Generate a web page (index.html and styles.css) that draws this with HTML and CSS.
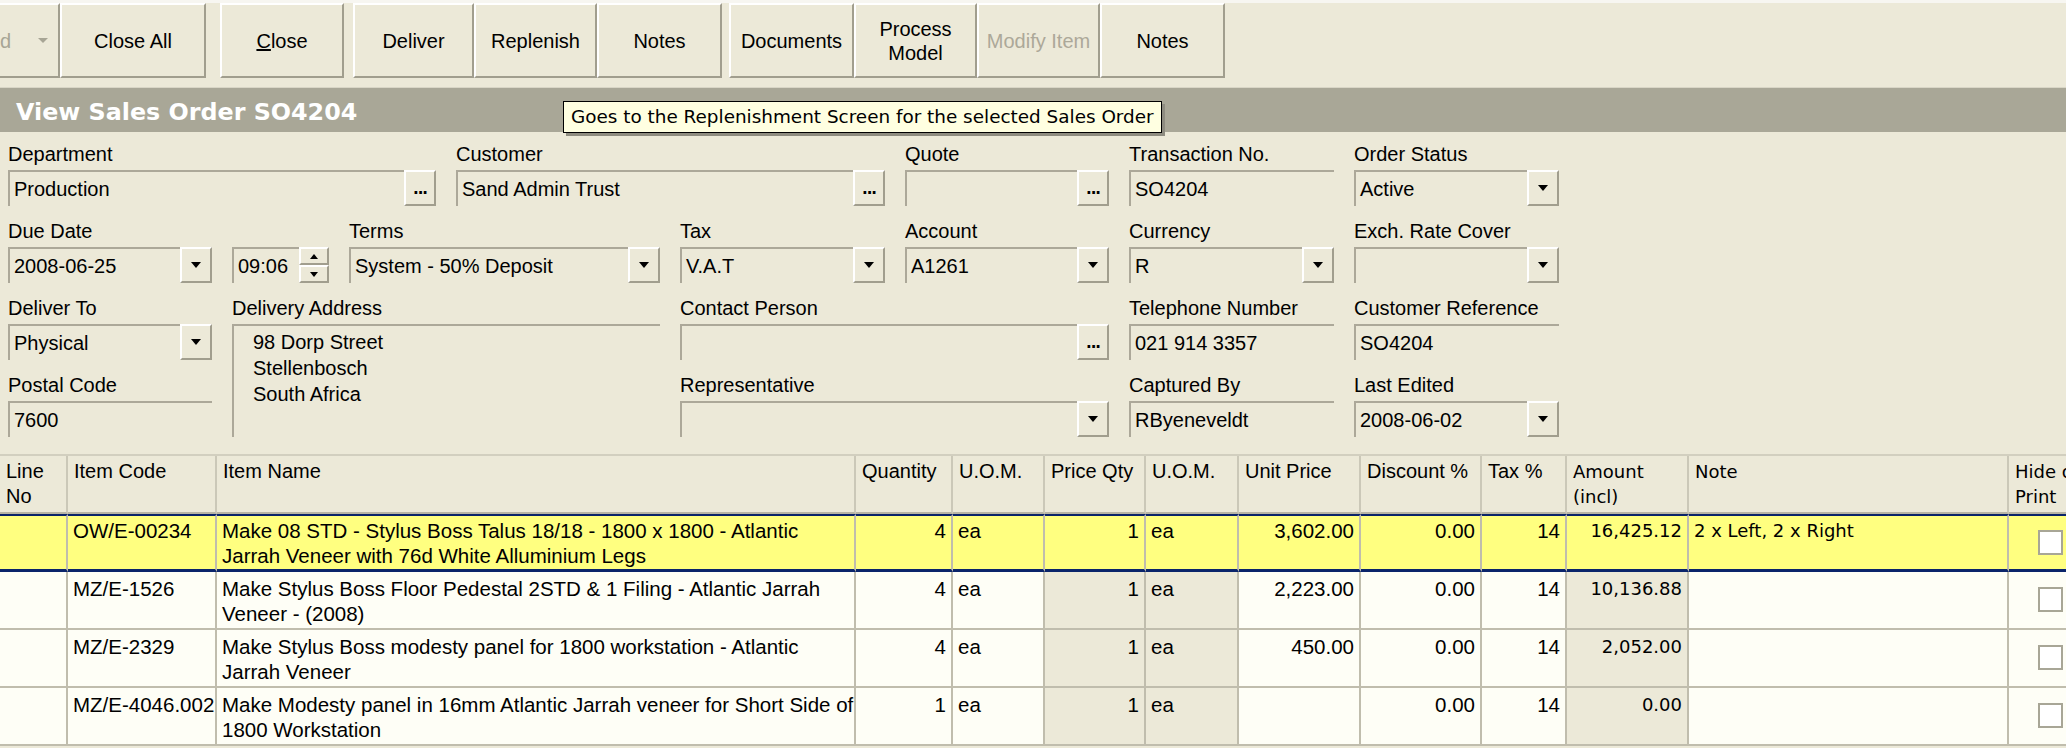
FILE: index.html
```html
<!DOCTYPE html>
<html>
<head>
<meta charset="utf-8">
<link rel="stylesheet" href="styles.css">
</head>
<body>
<div class="app">
  <div class="toolbar">
    <div class="tb-group">
      <div class="tbtn first"><span class="dis">d</span><span class="split-arrow"></span></div>
      <div class="tbtn w146">Close All</div>
    </div>
    <div class="tb-group g2">
      <div class="tbtn w124"><u>C</u>lose</div>
    </div>
    <div class="tb-group g3">
      <div class="tbtn w121">Deliver</div>
      <div class="tbtn w123">Replenish</div>
      <div class="tbtn w125">Notes</div>
    </div>
    <div class="tb-group g4">
      <div class="tbtn w125">Documents</div>
      <div class="tbtn w123">Process<br>Model</div>
      <div class="tbtn w123 disabled">Modify Item</div>
      <div class="tbtn w125">Notes</div>
    </div>
  </div>

  <div class="titlebar">
    <span class="title">View Sales Order SO4204</span>
    <div class="tooltip">Goes to the Replenishment Screen for the selected Sales Order</div>
  </div>

  <div class="form">
    <!-- row 1 -->
    <div class="field c1-3"><div class="lbl">Department</div><div class="box"><span class="val">Production</span><span class="btn3d dots">...</span></div></div>
    <div class="field c4-5"><div class="lbl">Customer</div><div class="box"><span class="val">Sand Admin Trust</span><span class="btn3d dots">...</span></div></div>
    <div class="field c6"><div class="lbl">Quote</div><div class="box"><span class="val"></span><span class="btn3d dots">...</span></div></div>
    <div class="field c7"><div class="lbl">Transaction No.</div><div class="box"><span class="val">SO4204</span></div></div>
    <div class="field c8"><div class="lbl">Order Status</div><div class="box"><span class="val">Active</span><span class="btn3d dd"></span></div></div>

    <!-- row 2 -->
    <div class="field c1"><div class="lbl">Due Date</div><div class="box"><span class="val">2008-06-25</span><span class="btn3d dd"></span></div></div>
    <div class="field c2"><div class="lbl">&nbsp;</div><div class="box"><span class="val">09:06</span><span class="spin"><span class="spin-up"></span><span class="spin-down"></span></span></div></div>
    <div class="field c3-4"><div class="lbl">Terms</div><div class="box"><span class="val">System - 50% Deposit</span><span class="btn3d dd"></span></div></div>
    <div class="field c5"><div class="lbl">Tax</div><div class="box"><span class="val">V.A.T</span><span class="btn3d dd"></span></div></div>
    <div class="field c6"><div class="lbl">Account</div><div class="box"><span class="val">A1261</span><span class="btn3d dd"></span></div></div>
    <div class="field c7"><div class="lbl">Currency</div><div class="box"><span class="val">R</span><span class="btn3d dd"></span></div></div>
    <div class="field c8"><div class="lbl">Exch. Rate Cover</div><div class="box"><span class="val"></span><span class="btn3d dd"></span></div></div>

    <!-- rows 3-4 -->
    <div class="field c1 r3"><div class="lbl">Deliver To</div><div class="box"><span class="val">Physical</span><span class="btn3d dd"></span></div></div>
    <div class="field c2-4 r3-4"><div class="lbl">Delivery Address</div><div class="box memo"><div class="memo-text">98 Dorp Street<br>Stellenbosch<br>South Africa</div></div></div>
    <div class="field c5-6 r3"><div class="lbl">Contact Person</div><div class="box"><span class="val"></span><span class="btn3d dots">...</span></div></div>
    <div class="field c7 r3"><div class="lbl">Telephone Number</div><div class="box"><span class="val">021 914 3357</span></div></div>
    <div class="field c8 r3"><div class="lbl">Customer Reference</div><div class="box"><span class="val">SO4204</span></div></div>

    <div class="field c1 r4"><div class="lbl">Postal Code</div><div class="box"><span class="val">7600</span></div></div>
    <div class="field c5-6 r4"><div class="lbl">Representative</div><div class="box"><span class="val"></span><span class="btn3d dd"></span></div></div>
    <div class="field c7 r4"><div class="lbl">Captured By</div><div class="box"><span class="val">RByeneveldt</span></div></div>
    <div class="field c8 r4"><div class="lbl">Last Edited</div><div class="box"><span class="val">2008-06-02</span><span class="btn3d dd"></span></div></div>
  </div>

  <div class="gridwrap">
    <table class="grid">
      <colgroup>
        <col class="w-line"><col class="w-code"><col class="w-name"><col class="w-qty"><col class="w-uom"><col class="w-pqty"><col class="w-uom2"><col class="w-price"><col class="w-disc"><col class="w-tax"><col class="w-amt"><col class="w-note"><col class="w-hide">
      </colgroup>
      <thead>
        <tr>
          <th>Line<br>No</th><th>Item Code</th><th>Item Name</th><th>Quantity</th><th>U.O.M.</th><th>Price Qty</th><th>U.O.M.</th><th>Unit Price</th><th>Discount %</th><th>Tax %</th><th class="tah">Amount<br>(incl)</th><th class="tah">Note</th><th class="tah">Hide on<br>Print</th>
        </tr>
      </thead>
      <tbody>
        <tr class="sel">
          <td></td><td>OW/E-00234</td><td>Make 08 STD - Stylus Boss Talus 18/18 - 1800 x 1800 - Atlantic<br>Jarrah Veneer with 76d White Alluminium Legs</td><td class="num">4</td><td>ea</td><td class="num sh">1</td><td class="sh">ea</td><td class="num">3,602.00</td><td class="num">0.00</td><td class="num">14</td><td class="num tah sh">16,425.12</td><td class="tah">2 x Left, 2 x Right</td><td class="cbcell"><span class="cb"></span></td>
        </tr>
        <tr>
          <td></td><td>MZ/E-1526</td><td>Make Stylus Boss Floor Pedestal 2STD &amp; 1 Filing - Atlantic Jarrah<br>Veneer - (2008)</td><td class="num">4</td><td>ea</td><td class="num sh">1</td><td class="sh">ea</td><td class="num">2,223.00</td><td class="num">0.00</td><td class="num">14</td><td class="num tah sh">10,136.88</td><td class="tah"></td><td class="cbcell"><span class="cb"></span></td>
        </tr>
        <tr>
          <td></td><td>MZ/E-2329</td><td>Make Stylus Boss modesty panel for 1800 workstation - Atlantic<br>Jarrah Veneer</td><td class="num">4</td><td>ea</td><td class="num sh">1</td><td class="sh">ea</td><td class="num">450.00</td><td class="num">0.00</td><td class="num">14</td><td class="num tah sh">2,052.00</td><td class="tah"></td><td class="cbcell"><span class="cb"></span></td>
        </tr>
        <tr>
          <td></td><td>MZ/E-4046.002</td><td>Make Modesty panel in 16mm Atlantic Jarrah veneer for Short Side of<br>1800 Workstation</td><td class="num">1</td><td>ea</td><td class="num sh">1</td><td class="sh">ea</td><td class="num"></td><td class="num">0.00</td><td class="num">14</td><td class="num tah sh">0.00</td><td class="tah"></td><td class="cbcell"><span class="cb"></span></td>
        </tr>
      </tbody>
    </table>
  </div>
</div>
</body>
</html>
```

FILE: styles.css
```css
html, body {
  margin: 0;
  padding: 0;
  background: #ECE9D8;
}
body {
  width: 2066px;
  height: 748px;
  overflow: hidden;
  font-family: "Liberation Sans", Arial, sans-serif;
  font-size: 20px;
  color: #000;
}
.app {
  width: 2066px;
  height: 748px;
  overflow: hidden;
  position: relative;
}

/* ---------- toolbar ---------- */
.toolbar {
  height: 84px;
  border-top: 3px solid #F7F6F1;
  border-bottom: 1px solid #D9D6C6;
  display: flex;
  align-items: flex-start;
  box-sizing: content-box;
}
.tb-group {
  display: flex;
}
.g2 { margin-left: 14px; }
.g3 { margin-left: 9px; }
.g4 { margin-left: 7px; }
.tbtn {
  height: 75px;
  box-sizing: border-box;
  border-left: 2px solid #FFFFFF;
  border-top: 2px solid #FFFFFF;
  border-right: 2px solid #A19E8E;
  border-bottom: 2px solid #A19E8E;
  display: flex;
  align-items: center;
  justify-content: center;
  text-align: center;
  line-height: 24px;
  font-size: 20px;
}
.tbtn.first {
  width: 60px;
  justify-content: space-between;
  padding: 0 10px 0 0;
  border-left: none;
}
.tbtn .dis { color: #A7A595; }
.split-arrow {
  width: 0;
  height: 0;
  border-left: 5px solid transparent;
  border-right: 5px solid transparent;
  border-top: 5px solid #A7A595;
}
.w146 { width: 146px; }
.w124 { width: 124px; }
.w121 { width: 121px; }
.w123 { width: 123px; }
.w125 { width: 125px; }
.tbtn.disabled { color: #ACA899; }

/* ---------- title bar ---------- */
.titlebar {
  height: 44px;
  box-sizing: border-box;
  padding-top: 3px;
  background: #A9A797;
  position: relative;
  display: flex;
  align-items: center;
  padding-left: 16px;
}
.title {
  color: #FFFFFF;
  font-family: "DejaVu Sans", sans-serif;
  font-weight: bold;
  font-size: 23.8px;
}
.tooltip {
  position: absolute;
  left: 563px;
  top: 13px;
  width: 599px;
  height: 32px;
  box-sizing: border-box;
  background: #FFFFE1;
  border: 1px solid #000;
  box-shadow: 3px 3px 0 #8E8C80;
  font-family: "DejaVu Sans", sans-serif;
  font-size: 18.4px;
  line-height: 30px;
  padding-left: 7px;
  white-space: nowrap;
  z-index: 5;
}

/* ---------- form ---------- */
.form {
  height: 322px;
  box-sizing: border-box;
  padding: 10px 0 0 8px;
  display: grid;
  grid-template-columns: 204px 97px 87px 204px 205px 204px 205px 205px;
  grid-template-rows: 64px 64px 64px 64px;
  column-gap: 20px;
  row-gap: 13px;
}
.field {
  display: flex;
  flex-direction: column;
  min-width: 0;
}
.lbl {
  height: 28px;
  line-height: 24px;
  white-space: nowrap;
}
.box {
  height: 36px;
  box-sizing: border-box;
  display: flex;
  border-top: 2px solid #ACA899;
  border-left: 2px solid #ACA899;
}
.val {
  flex: 1;
  min-width: 0;
  padding-left: 4px;
  line-height: 34px;
  white-space: nowrap;
  overflow: hidden;
}
.btn3d {
  width: 32px;
  box-sizing: border-box;
  margin-top: -2px;
  height: 36px;
  border-left: 2px solid #FFFFFF;
  border-top: 2px solid #FFFFFF;
  border-right: 2px solid #A19E8E;
  border-bottom: 2px solid #A19E8E;
  background: #ECE9D8;
  display: flex;
  align-items: center;
  justify-content: center;
}
.dots {
  font-family: "DejaVu Sans", sans-serif;
  font-weight: bold;
  font-size: 15px;
  line-height: 15px;
  padding-top: 2px;
  letter-spacing: -1px;
}
.dd::after {
  content: "";
  width: 0;
  height: 0;
  border-left: 5px solid transparent;
  border-right: 5px solid transparent;
  border-top: 6px solid #000;
}
.spin {
  width: 30px;
  margin-top: -2px;
  height: 36px;
  display: flex;
  flex-direction: column;
}
.spin-up, .spin-down {
  flex: 1;
  box-sizing: border-box;
  border-left: 2px solid #FFFFFF;
  border-top: 2px solid #FFFFFF;
  border-right: 2px solid #A19E8E;
  border-bottom: 2px solid #A19E8E;
  display: flex;
  align-items: center;
  justify-content: center;
}
.spin-up::after {
  content: "";
  border-left: 4px solid transparent;
  border-right: 4px solid transparent;
  border-bottom: 5px solid #000;
}
.spin-down::after {
  content: "";
  border-left: 4px solid transparent;
  border-right: 4px solid transparent;
  border-top: 5px solid #000;
}
.memo {
  flex: 1;
  height: auto;
}
.memo-text {
  padding: 3px 0 0 19px;
  line-height: 26px;
}

.c1 { grid-column: 1; }
.c2 { grid-column: 2; }
.c5 { grid-column: 5; }
.c6 { grid-column: 6; }
.c7 { grid-column: 7; }
.c8 { grid-column: 8; }
.c1-3 { grid-column: 1 / 4; }
.c4-5 { grid-column: 4 / 6; }
.c3-4 { grid-column: 3 / 5; }
.c2-4 { grid-column: 2 / 5; }
.c5-6 { grid-column: 5 / 7; }
.r3 { grid-row: 3; }
.r4 { grid-row: 4; }
.r3-4 { grid-row: 3 / 5; }

/* ---------- grid ---------- */
.gridwrap {
  border-top: 2px solid #D2CFBF;
  overflow: hidden;
  width: 2066px;
}
.grid {
  border-collapse: separate;
  border-spacing: 0;
  table-layout: fixed;
  width: 2079px;
}
.w-line { width: 68px; }
.w-code { width: 149px; }
.w-name { width: 639px; }
.w-qty { width: 97px; }
.w-uom { width: 92px; }
.w-pqty { width: 101px; }
.w-uom2 { width: 93px; }
.w-price { width: 122px; }
.w-disc { width: 121px; }
.w-tax { width: 85px; }
.w-amt { width: 122px; }
.w-note { width: 320px; }
.w-hide { width: 70px; }

.grid th {
  height: 58px;
  box-sizing: border-box;
  background: #ECE9D8;
  font-weight: normal;
  text-align: left;
  vertical-align: top;
  padding: 3px 4px 0 6px;
  line-height: 25px;
  border-right: 2px solid #CBC8B8;
  border-bottom: 2px solid #B7B4A4;
  white-space: nowrap;
  overflow: hidden;
}
.grid td {
  height: 58px;
  box-sizing: border-box;
  background: #FEFEF6;
  vertical-align: top;
  padding: 4px 5px 0 5px;
  font-size: 20.5px;
  line-height: 25px;
  border-right: 2px solid #C0BDAD;
  border-bottom: 2px solid #C0BDAD;
  white-space: nowrap;
  overflow: hidden;
}
.grid td.sh { background: #ECE9D8; }
.grid td.num { text-align: right; padding-right: 5px; }
.grid .tah {
  font-family: "DejaVu Sans", sans-serif;
  font-size: 18px;
}
.grid tr.sel td {
  height: 58px;
  background: #FFFF80;
  border-top: 2px solid #0A246A;
  border-bottom: 3px solid #0A246A;
  padding-top: 2px;
}
.grid td.cbcell {
  padding: 15px 0 0 29px;
}
.grid tr.sel td.cbcell { padding-top: 14px; }
.cb {
  display: block;
  width: 25px;
  height: 25px;
  box-sizing: border-box;
  background: #FFFFFF;
  border: 2px solid #A8A696;
}
```
